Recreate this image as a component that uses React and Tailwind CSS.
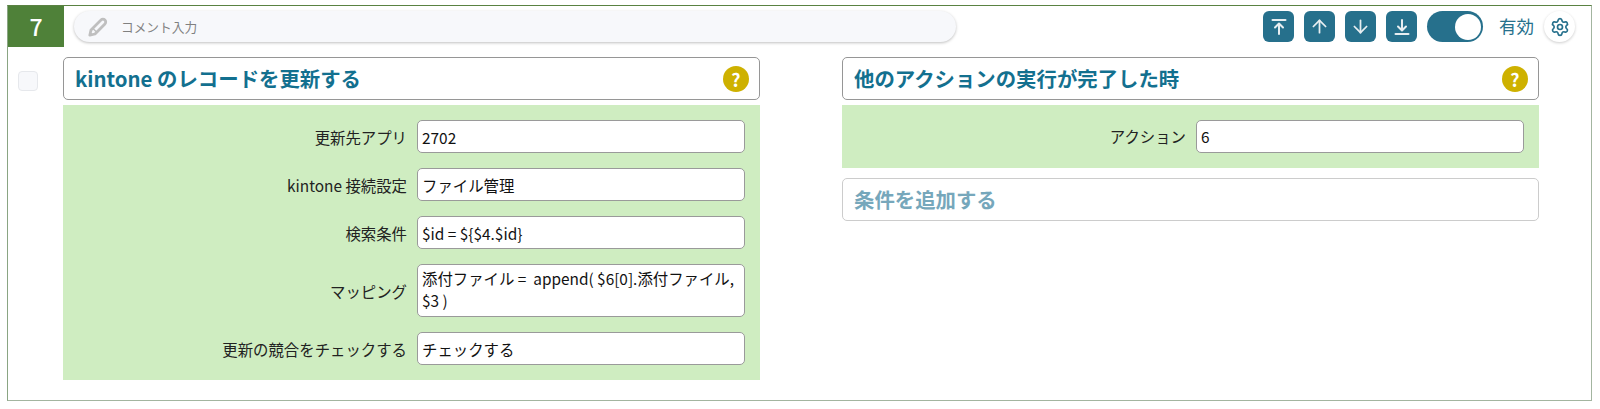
import React from "react";
import { ArrowUp, ArrowDown, Settings } from "lucide-react";

const font = "font-['Noto_Sans_CJK_JP','Noto_Sans',sans-serif]";

function Title({ children, help = true, muted = false }) {
  return (
    <div className={`flex h-[43px] items-center justify-between rounded-[5px] border bg-white pl-[11px] pr-[10px] text-[20.4px] font-bold ${muted ? "border-[#cccccc] text-[#76a7bb]" : "border-[#969696] text-[#13708f]"}`}>
      <span>{children}</span>
      {help && (
        <span className="flex h-[26px] w-[26px] items-center justify-center rounded-full bg-[#ceb100] text-[18px] font-bold leading-none text-white">?</span>
      )}
    </div>
  );
}

function Row({ label, value, tall }) {
  return (
    <div className="flex items-center">
      <div className="w-[354px] pr-[10px] text-right text-[15.4px] leading-[20px] text-[#222222]">{label}</div>
      <div className={`w-[328px] rounded-[5px] border border-[#9a9a9a] bg-white px-[4px] text-[15.4px] text-[#111111] ${tall ? "h-[53px] py-[2px] leading-[22px]" : "flex h-[33px] items-center leading-[20px]"}`}>
        {value}
      </div>
    </div>
  );
}

function MoveBtn({ children }) {
  return (
    <span className="flex h-[31px] w-[31px] items-center justify-center rounded-[6px] bg-[#26708c] text-[#e8eef1]">
      {children}
    </span>
  );
}

function EdgeArrow({ down }) {
  return (
    <svg width="20" height="20" viewBox="0 0 20 20" fill="none" stroke="currentColor" strokeWidth="2" strokeLinecap="round" strokeLinejoin="round">
      {down ? (
        <>
          <path d="M10 3v10M6 9.5l4 4 4-4" />
          <path d="M3.5 17h13" />
        </>
      ) : (
        <>
          <path d="M3.5 3h13" />
          <path d="M10 17V7M6 10.5l4-4 4 4" />
        </>
      )}
    </svg>
  );
}

export default function App() {
  return (
    <div className={`h-[409px] w-[1600px] bg-white pb-[8px] pl-[7px] pr-[8px] pt-[5px] ${font}`}>
      <div className="h-full border border-[#a3b5a0] border-t-[#5a8242] border-l-[#8aa583]">
        <div className="flex h-[41px] items-center">
          <div className="flex h-[41px] w-[56px] items-center justify-center bg-[#4f8139] text-[23px] font-medium text-white">7</div>
          <div className="ml-[10px] flex h-[31px] w-[882px] items-center rounded-full bg-[#f7f8fb] pl-[14px] shadow-[0_1px_3px_rgba(0,0,0,0.25)]">
            <svg width="20" height="20" viewBox="0 0 20 20" fill="none" stroke="#bfbfbf" strokeWidth="2.8" strokeLinejoin="round">
              <path d="M1.8 18.2l1.2-5.2L13 3a2.4 2.4 0 0 1 3.9 3.9L7 17z" />
              <path d="M5 11.5l3.5 3.5" strokeWidth="1.4" />
            </svg>
            <span className="ml-[13px] text-[12.7px] text-[#808080]">コメント入力</span>
          </div>
          <div className="ml-auto flex items-center">
            <div className="flex gap-[10px]">
              <MoveBtn><EdgeArrow /></MoveBtn>
              <MoveBtn><ArrowUp size={21} strokeWidth={2} /></MoveBtn>
              <MoveBtn><ArrowDown size={21} strokeWidth={2} /></MoveBtn>
              <MoveBtn><EdgeArrow down /></MoveBtn>
            </div>
            <div className="ml-[10px] flex h-[31px] w-[56px] items-center justify-end rounded-full bg-[#26708c] pr-[2px]">
              <span className="h-[26px] w-[26px] rounded-full bg-white" />
            </div>
            <span className="ml-[16px] text-[17.5px] text-[#26708c]">有効</span>
            <span className="ml-[10px] mr-[16px] flex h-[31px] w-[31px] items-center justify-center rounded-full bg-white shadow-[0_1px_3px_rgba(0,0,0,0.2)]">
              <Settings size={20} strokeWidth={2} className="text-[#26708c]" />
            </span>
          </div>
        </div>
        <div className="mt-[10px] flex">
          <div className="ml-[10px] mt-[14px] h-[20px] w-[20px] rounded-[4px] border border-[#e6e8ec] bg-[#f7f8fb]" />
          <div className="ml-[25px] w-[697px]">
            <Title>kintone のレコードを更新する</Title>
            <div className="mt-[5px] flex h-[275px] flex-col gap-[15px] bg-[#cfedc1] pt-[15px]">
              <Row label="更新先アプリ" value="2702" />
              <Row label="kintone 接続設定" value="ファイル管理" />
              <Row label="検索条件" value="$id = ${$4.$id}" />
              <Row label="マッピング" value={<>添付ファイル = &nbsp;append( $6[0].添付ファイル,<br />$3 )</>} tall />
              <Row label="更新の競合をチェックする" value="チェックする" />
            </div>
          </div>
          <div className="ml-[82px] w-[697px]">
            <Title>他のアクションの実行が完了した時</Title>
            <div className="mt-[5px] flex h-[63px] items-center justify-end bg-[#cfedc1] pr-[15px]">
              <div className="pr-[10px] text-[15.4px] text-[#222222]">アクション</div>
              <div className="flex h-[33px] w-[328px] items-center rounded-[5px] border border-[#9a9a9a] bg-white px-[4px] text-[15.4px] text-[#111111]">6</div>
            </div>
            <div className="mt-[10px]">
              <Title help={false} muted>条件を追加する</Title>
            </div>
          </div>
        </div>
      </div>
    </div>
  );
}
